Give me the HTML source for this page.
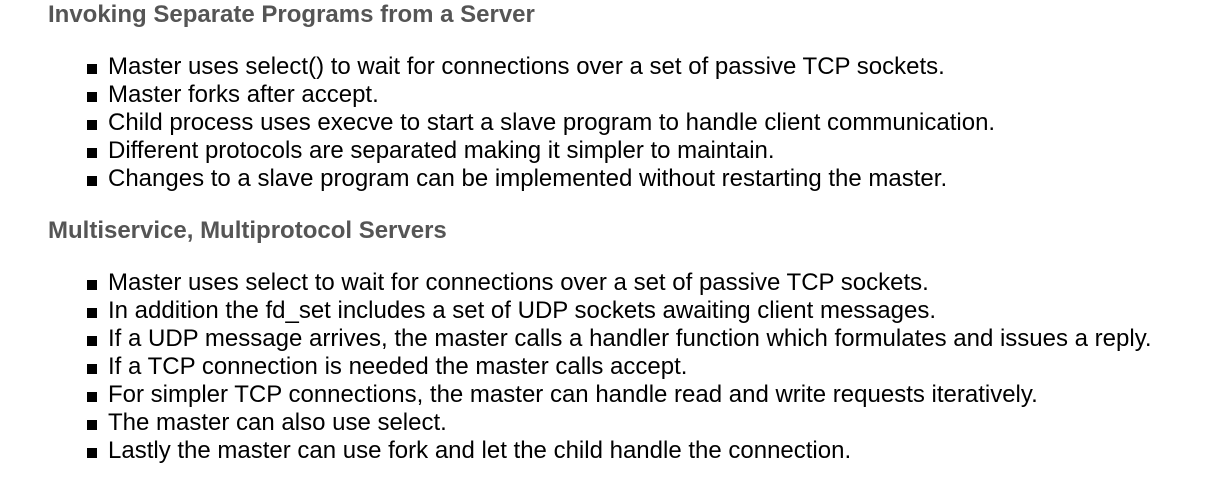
<!DOCTYPE html>
<html><head><style>
body{margin:0;background:#fff;font-family:"Liberation Sans",Arial,sans-serif;}
h3{position:absolute;left:48px;margin:0;font-size:24px;font-weight:bold;color:#555;line-height:28px;}
ul{position:absolute;left:108px;margin:0;padding:0;list-style:none;}
li{font-size:24px;line-height:28px;color:#000;position:relative;white-space:nowrap;}
li:before{content:"";position:absolute;left:-21px;top:11px;width:10px;height:10px;background:#000;}
</style></head><body>
<h3 style="top:1px">Invoking Separate Programs from a Server</h3>
<ul style="top:53px">
<li>Master uses select() to wait for connections over a set of passive TCP sockets.</li>
<li>Master forks after accept.</li>
<li>Child process uses execve to start a slave program to handle client communication.</li>
<li>Different protocols are separated making it simpler to maintain.</li>
<li>Changes to a slave program can be implemented without restarting the master.</li>
</ul>
<h3 style="top:217px">Multiservice, Multiprotocol Servers</h3>
<ul style="top:269px">
<li>Master uses select to wait for connections over a set of passive TCP sockets.</li>
<li>In addition the fd_set includes a set of UDP sockets awaiting client messages.</li>
<li>If a UDP message arrives, the master calls a handler function which formulates and issues a reply.</li>
<li>If a TCP connection is needed the master calls accept.</li>
<li>For simpler TCP connections, the master can handle read and write requests iteratively.</li>
<li>The master can also use select.</li>
<li>Lastly the master can use fork and let the child handle the connection.</li>
</ul>
</body></html>
